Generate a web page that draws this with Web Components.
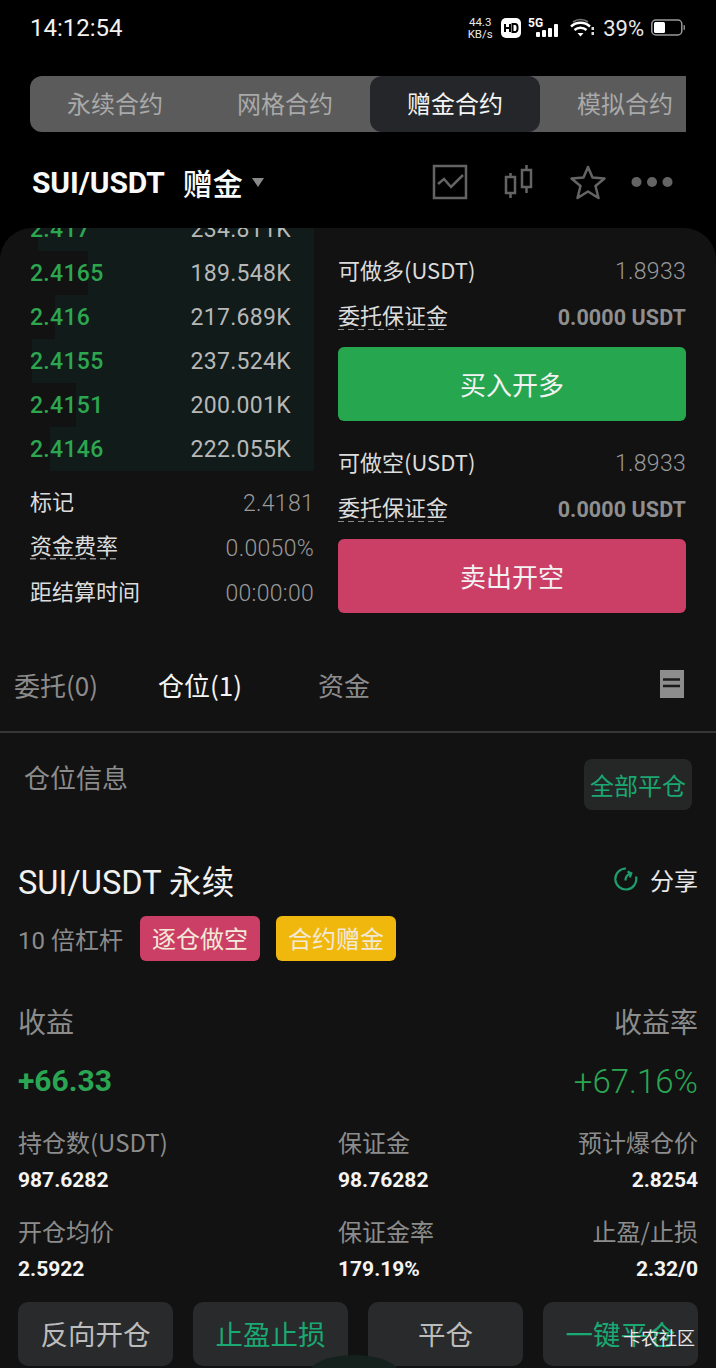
<!DOCTYPE html>
<html lang="zh">
<head>
<meta charset="utf-8">
<title>SUI/USDT</title>
<style>
html, body { margin: 0; padding: 0; background: #000; }
body {
    width: 716px;
    height: 1368px;
    overflow: hidden;
    font-family: Roboto, "Noto Sans CJK SC", sans-serif;
    color: #fff;
}
</style>
</head>
<body>
<status-bar></status-bar>
<contract-tabs></contract-tabs>
<pair-header></pair-header>
<main-panel>
    <order-book slot="book"></order-book>
    <trade-panel slot="trade"></trade-panel>
    <position-tabs slot="tabs"></position-tabs>
    <position-card slot="card"></position-card>
</main-panel>
<script>
class StatusBar extends HTMLElement {
    constructor() {
        super();
        this.attachShadow({ mode: 'open' });
        this.shadowRoot.innerHTML = `<style>
        :host { display: flex; height: 56px; align-items: center; justify-content: space-between; padding: 0 31px 0 30px; }
        .time { font-size: 24px; color: #f2f2f2; }
        .right { display: flex; align-items: center; color: #e8e8e8; }
        .speed { font-size: 11.500px; text-align: center; width: 26px; margin-right: 8px; white-space: nowrap; }
        .speed div { height: 12px; line-height: 12px; }
        .pct { font-size: 22px; margin: 0 7px 0 8px; }
        svg { display: block; }
        </style>
        <span class="time">14:12:54</span>
        <div class="right">
            <div class="speed"><div>44.3</div><div>KB/s</div></div>
            <svg width="20" height="20" viewBox="0 0 20 20"><rect width="20" height="20" rx="5" fill="#fff"/><path d="M4 6v8M9 6v8M4 10h5" stroke="#000" stroke-width="2" fill="none"/><path d="M11.500 6v8h2.500a2.500 3 0 0 0 2.500-3v-2a2.500 3 0 0 0-2.500-3z" stroke="#000" stroke-width="2" fill="none"/></svg>
            <svg width="32" height="22" viewBox="0 0 32 22" style="margin-left:7px"><text x="0" y="10" font-size="12" font-weight="700" fill="#fff" font-family="Roboto">5G</text><rect x="8" y="15" width="4" height="5" rx="1" fill="#fff"/><rect x="14" y="13" width="4" height="7" rx="1" fill="#fff"/><rect x="20" y="11" width="4" height="9" rx="1" fill="#fff"/><rect x="26" y="7" width="4" height="13" rx="1" fill="#fff"/></svg>
            <svg width="25" height="20" viewBox="0 0 25 20" style="margin-left:10px"><path d="M3 4a13 13 0 0 1 15 0" stroke="#777" stroke-width="1.800" fill="none"/><path d="M1 8.500a14 14 0 0 1 19 0" stroke="#fff" stroke-width="2.400" fill="none"/><path d="M4.500 12a9 9 0 0 1 12 0" stroke="#fff" stroke-width="2.400" fill="none"/><path d="M7.500 15h6l-3 3.500z" fill="#fff"/><rect x="21.500" y="9" width="2.500" height="3" fill="#ddd"/><rect x="21.500" y="14" width="2.500" height="3" fill="#ddd"/></svg>
            <span class="pct">39%</span>
            <svg width="34" height="18" viewBox="0 0 34 18"><rect x=".8" y="1" width="30" height="15" rx="4" stroke="#999" stroke-width="1.500" fill="none"/><rect x="3" y="3" width="11" height="11" rx="1.500" fill="#fff"/><rect x="32.500" y="6" width="1.500" height="5" rx=".7" fill="#888"/></svg>
        </div>`;
    }
}

class ContractTabs extends HTMLElement {
    constructor() {
        super();
        this.attachShadow({ mode: 'open' });
        this.shadowRoot.innerHTML = `<style>
        :host { display: flex; margin: 20px 30px 0; height: 56px; background: #5b5b5b; border-radius: 12px 0 0 12px; overflow: hidden; }
        div { flex: 0 0 170px; box-sizing: border-box; padding-bottom: 4px; display: flex; align-items: center; justify-content: center; font-size: 24px; color: #a9a9a9; font-family: "Noto Sans CJK SC", sans-serif; }
        .on { background: #24262a; color: #f4f4f4; border-radius: 12px; }
        </style>
        <div>永续合约</div><div>网格合约</div><div class="on">赠金合约</div><div>模拟合约</div>`;
    }
}

class PairHeader extends HTMLElement {
    constructor() {
        super();
        this.attachShadow({ mode: 'open' });
        this.shadowRoot.innerHTML = `<style>
        :host { display: flex; height: 96px; padding: 4px 43px 0 32px; box-sizing: border-box; align-items: center; font-family: Roboto, "Noto Sans CJK SC", sans-serif; }
        .pair { font-size: 30px; font-weight: 700; letter-spacing: -.1px; color: #fafafa; }
        .bonus { font-size: 30px; font-weight: 500; margin-left: 18px; color: #fafafa; font-family: "Noto Sans CJK SC", sans-serif; }
        .caret { width: 0; height: 0; border: 6.500px solid transparent; border-top: 9px solid #8a8a8a; border-bottom: 0; margin: 0 0 0 9px; }
        .icons { margin-left: auto; display: flex; align-items: center; }
        svg { display: block; }
        </style>
        <span class="pair">SUI/USDT</span><span class="bonus">赠金</span><span class="caret"></span>
        <div class="icons">
            <svg width="36" height="36" viewBox="0 0 36 36" fill="none" stroke="#646464" stroke-width="2.500"><rect x="2" y="2" width="32" height="32"/><path d="M6 20l6-5 7 8 12-12"/></svg>
            <svg width="30" height="36" viewBox="0 0 30 36" fill="none" stroke="#646464" stroke-width="2.500" style="margin-left:36px"><rect x="2" y="13" width="9" height="16"/><path d="M6.500 9v4M6.500 29v5"/><rect x="18" y="6" width="9" height="17"/><path d="M22.500 1v5M22.500 23v6"/></svg>
            <svg width="36" height="36" viewBox="0 0 36 36" fill="none" stroke="#646464" stroke-width="2.500" style="margin-left:36px"><path d="M18 3l4.500 10.500 12 1-9 7.500 3 12-10.500-6.500-10.500 6.500 3-12-9-7.500 12-1z" stroke-linejoin="round"/></svg>
            <svg width="42" height="12" viewBox="0 0 42 12" fill="#646464" style="margin-left:25px"><circle cx="5.500" cy="6" r="5"/><circle cx="21" cy="6" r="5"/><circle cx="36.500" cy="6" r="5"/></svg>
        </div>`;
    }
}

class MainPanel extends HTMLElement {
    constructor() {
        super();
        this.attachShadow({ mode: 'open' });
        this.shadowRoot.innerHTML = `<style>
        :host { display: block; height: 1140px; background: #121212; border-radius: 32px 32px 0 0; overflow: hidden; font-family: "Noto Sans CJK SC", sans-serif; }
        .top { display: flex; height: 404px; }
        .top ::slotted(order-book) { flex: 0 0 338px; }
        .top ::slotted(trade-panel) { flex: 1; }
        </style>
        <div class="top"><slot name="book"></slot><slot name="trade"></slot></div>
        <slot name="tabs"></slot>
        <slot name="card"></slot>`;
    }
}

class BookRow extends HTMLElement {
    constructor() {
        super();
        this.attachShadow({ mode: 'open' });
        this.shadowRoot.innerHTML = `<style>
        :host { display: flex; position: relative; height: 44px; align-items: center; justify-content: space-between; margin-left: 30px; padding-right: 23px; width: 261px; font-size: 23px; letter-spacing: .3px; font-family: Roboto, sans-serif; }
        .bar { position: absolute; top: 0; bottom: 0; right: 0; left: var(--from, 2px); background: #101b1a; }
        span { position: relative; }
        .p { color: #2da650; font-weight: 500; }
        .q { color: #b8b8b8; }
        </style><i class="bar"></i><span class="p"></span><span class="q"></span>`;
    }
    connectedCallback() {
        this.shadowRoot.querySelector('.p').textContent = this.getAttribute('price');
        this.shadowRoot.querySelector('.q').textContent = this.getAttribute('qty');
        this.style.setProperty('--from', (this.getAttribute('from') || 2) + 'px');
    }
}

class StatRow extends HTMLElement {
    constructor() {
        super();
        this.attachShadow({ mode: 'open' });
        this.shadowRoot.innerHTML = `<style>
        :host { display: flex; justify-content: space-between; align-items: center; font-size: 22px; color: #dcdcdc; }
        :host([tip]) .k { background: repeating-linear-gradient(90deg, #8a8a8a 0 6px, transparent 6px 10px) left bottom / 100% 1.500px no-repeat; line-height: 28px; padding-bottom: 2px; }
        .k { line-height: 30px; }
        .v { color: #999; font-size: 23px; font-weight: 300; letter-spacing: .3px; padding-top: var(--value-pad, 4px); font-family: Roboto, sans-serif; }
        :host([strong]) .v { font-size: 21.500px; font-weight: 700; letter-spacing: .1px; color: #8f8f8f; }
        </style><span class="k"><slot></slot></span><span class="v"></span>`;
    }
    connectedCallback() {
        this.shadowRoot.querySelector('.v').textContent = this.getAttribute('value');
    }
}

class OrderBook extends HTMLElement {
    constructor() {
        super();
        this.attachShadow({ mode: 'open' });
        this.shadowRoot.innerHTML = `<style>
        :host { display: block; overflow: hidden; }
        .rows { margin-top: -21px; }
        .stats { display: flex; flex-direction: column; gap: 0; padding: 6px 24px 0 30px; --value-pad: 8px; }
        stat-row { height: 45px; }
        </style>
        <div class="rows">
            <book-row price="2.417" qty="234.811K" from="8"></book-row>
            <book-row price="2.4165" qty="189.548K" from="58"></book-row>
            <book-row price="2.416" qty="217.689K" from="25"></book-row>
            <book-row price="2.4155" qty="237.524K" from="2"></book-row>
            <book-row price="2.4151" qty="200.001K" from="46"></book-row>
            <book-row price="2.4146" qty="222.055K" from="20"></book-row>
        </div>
        <div class="stats">
            <stat-row value="2.4181">标记</stat-row>
            <stat-row value="0.0050%" tip>资金费率</stat-row>
            <stat-row value="00:00:00">距结算时间</stat-row>
        </div>`;
    }
}

class TradeButton extends HTMLElement {
    constructor() {
        super();
        this.attachShadow({ mode: 'open' });
        this.shadowRoot.innerHTML = `<style>
        :host { display: flex; height: 74px; box-sizing: border-box; padding-bottom: 2px; align-items: center; justify-content: center; border-radius: 6px; background: var(--bg); color: #f2f2f2; font-size: 26px; }
        </style><slot></slot>`;
    }
}

class TradePanel extends HTMLElement {
    constructor() {
        super();
        this.attachShadow({ mode: 'open' });
        this.shadowRoot.innerHTML = `<style>
        :host { display: flex; flex-direction: column; padding: 18px 30px 0 0; }
        stat-row { height: 46px; }
        trade-button { margin-bottom: 17px; margin-top: 9px; }
        </style>
        <stat-row value="1.8933">可做多(USDT)</stat-row>
        <stat-row value="0.0000 USDT" tip strong>委托保证金</stat-row>
        <trade-button style="--bg:#26a64f">买入开多</trade-button>
        <stat-row value="1.8933">可做空(USDT)</stat-row>
        <stat-row value="0.0000 USDT" tip strong>委托保证金</stat-row>
        <trade-button style="--bg:#cb3f66">卖出开空</trade-button>`;
    }
}

class PositionTabs extends HTMLElement {
    constructor() {
        super();
        this.attachShadow({ mode: 'open' });
        this.shadowRoot.innerHTML = `<style>
        :host { display: flex; height: 101px; box-sizing: border-box; align-items: center; border-bottom: 2px solid #363636; padding: 18px 32px 12px 14px; font-size: 26px; color: #8c8c8c; }
        .on { color: #f4f4f4; margin-left: 60px; }
        .funds { margin-left: 76px; }
        svg { margin-left: auto; margin-bottom: 2px; display: block; }
        </style>
        <span>委托(0)</span><span class="on">仓位(1)</span><span class="funds">资金</span>
        <svg width="24" height="28" viewBox="0 0 24 28"><rect width="24" height="28" fill="#8d8d8d"/><path d="M3 9.500h17M3 16h17" stroke="#1b1b1b" stroke-width="2.500"/></svg>`;
    }
}

class BadgeTag extends HTMLElement {
    constructor() {
        super();
        this.attachShadow({ mode: 'open' });
        this.shadowRoot.innerHTML = `<style>
        :host { display: flex; width: 120px; height: 45px; box-sizing: border-box; padding-bottom: 3px; align-items: center; justify-content: center; border-radius: 6px; background: var(--bg); color: #f3e9d8; font-size: 24px; }
        </style><slot></slot>`;
    }
}

class InfoCell extends HTMLElement {
    constructor() {
        super();
        this.attachShadow({ mode: 'open' });
        this.shadowRoot.innerHTML = `<style>
        :host { display: flex; flex-direction: column; gap: 10px; }
        :host([end]) { align-items: flex-end; }
        .k { font-size: 24px; line-height: 30px; color: #8c8c8c; }
        .v { font-size: 21px; line-height: 26px; font-weight: 700; color: #f4f4f4; font-family: Roboto, sans-serif; }
        </style><span class="k"><slot></slot></span><span class="v"></span>`;
    }
    connectedCallback() {
        this.shadowRoot.querySelector('.v').textContent = this.getAttribute('value');
    }
}

class ActionButton extends HTMLElement {
    constructor() {
        super();
        this.attachShadow({ mode: 'open' });
        this.shadowRoot.innerHTML = `<style>
        :host { display: flex; height: 64px; box-sizing: border-box; padding-bottom: 3px; align-items: center; justify-content: center; border-radius: 10px; background: #282a2b; color: #bcbcbc; font-size: 27.500px; }
        :host([green]) { color: #1aa873; }
        </style><slot></slot>`;
    }
}

class PositionCard extends HTMLElement {
    constructor() {
        super();
        this.attachShadow({ mode: 'open' });
        this.shadowRoot.innerHTML = `<style>
        :host { display: block; position: relative; padding: 0 18px; height: 635px; }
        .head { display: flex; justify-content: space-between; align-items: flex-start; padding: 26px 6px 0 6px; height: 71px; }
        .head span { font-size: 26px; color: #8c8c8c; margin-top: -1px; line-height: 38px; }
        .all { display: flex; width: 108px; height: 51px; align-items: center; justify-content: center; border-radius: 8px; background: #242726; color: #1aa873; font-size: 24px; }
        .title { display: flex; justify-content: space-between; align-items: center; margin-top: 26px; height: 46px; }
        .name { font-size: 32.600px; color: #f0f0f0; font-family: Roboto, "Noto Sans CJK SC", sans-serif; }
        .share { display: flex; align-items: center; gap: 12px; font-size: 24px; color: #e8e8e8; }
        .tags { display: flex; align-items: center; margin-top: 14px; }
        .tags span { font-size: 24px; color: #8c8c8c; width: 122px; font-family: Roboto, "Noto Sans CJK SC", sans-serif; }
        .tags badge-tag + badge-tag { margin-left: 16px; }
        .pnl-k, .pnl-v { display: flex; justify-content: space-between; align-items: center; }
        .pnl-k { margin-top: 40px; font-size: 28px; color: #8c8c8c; height: 40px; }
        .pnl-v { margin-top: 18px; height: 42px; color: #2aa552; font-family: Roboto, sans-serif; }
        .pnl-v b { font-size: 30px; }
        .pnl-v span { font-size: 33px; font-weight: 300; padding-top: 2px; }
        .grid { display: grid; grid-template-columns: 320px 1fr auto; row-gap: 23px; margin-top: 26px; }
        .actions { display: grid; grid-template-columns: repeat(4, 155px); gap: 20px; margin-top: 20px; }
        .mark { position: absolute; right: 21px; top: 591px; font-size: 18px; color: #e6e6e6; }
        .bump { position: absolute; left: 308px; top: 622px; width: 92px; height: 40px; background: #15211d; border-radius: 50%; }
        </style>
        <div class="head"><span>仓位信息</span><div class="all">全部平仓</div></div>
        <div class="title">
            <div class="name">SUI/USDT 永续</div>
            <div class="share">
                <svg width="24" height="24" viewBox="0 0 24 24" fill="none" stroke="#1f9e6d" stroke-width="2.200"><path d="M12 1.500A10.500 10.500 0 1 0 22 9.500"/><path d="M11.500 13.500c0-3.500 1.500-6 5.500-7M13.500 4.500l3.800 1.800-1.500 4"/></svg>
                分享
            </div>
        </div>
        <div class="tags">
            <span>10 倍杠杆</span>
            <badge-tag style="--bg:#cb3f66">逐仓做空</badge-tag>
            <badge-tag style="--bg:#f0b80c">合约赠金</badge-tag>
        </div>
        <div class="pnl-k"><span>收益</span><span>收益率</span></div>
        <div class="pnl-v"><b>+66.33</b><span>+67.16%</span></div>
        <div class="grid">
            <info-cell value="987.6282">持仓数(USDT)</info-cell>
            <info-cell value="98.76282">保证金</info-cell>
            <info-cell value="2.8254" end>预计爆仓价</info-cell>
            <info-cell value="2.5922">开仓均价</info-cell>
            <info-cell value="179.19%">保证金率</info-cell>
            <info-cell value="2.32/0" end>止盈/止损</info-cell>
        </div>
        <div class="actions">
            <action-button>反向开仓</action-button>
            <action-button green>止盈止损</action-button>
            <action-button>平仓</action-button>
            <action-button green>一键平仓</action-button>
        </div>
        <div class="bump"></div>
        <div class="mark">卡农社区</div>`;
    }
}

customElements.define('status-bar', StatusBar);
customElements.define('contract-tabs', ContractTabs);
customElements.define('pair-header', PairHeader);
customElements.define('main-panel', MainPanel);
customElements.define('book-row', BookRow);
customElements.define('stat-row', StatRow);
customElements.define('order-book', OrderBook);
customElements.define('trade-button', TradeButton);
customElements.define('trade-panel', TradePanel);
customElements.define('position-tabs', PositionTabs);
customElements.define('badge-tag', BadgeTag);
customElements.define('info-cell', InfoCell);
customElements.define('action-button', ActionButton);
customElements.define('position-card', PositionCard);
</script>
</body>
</html>
